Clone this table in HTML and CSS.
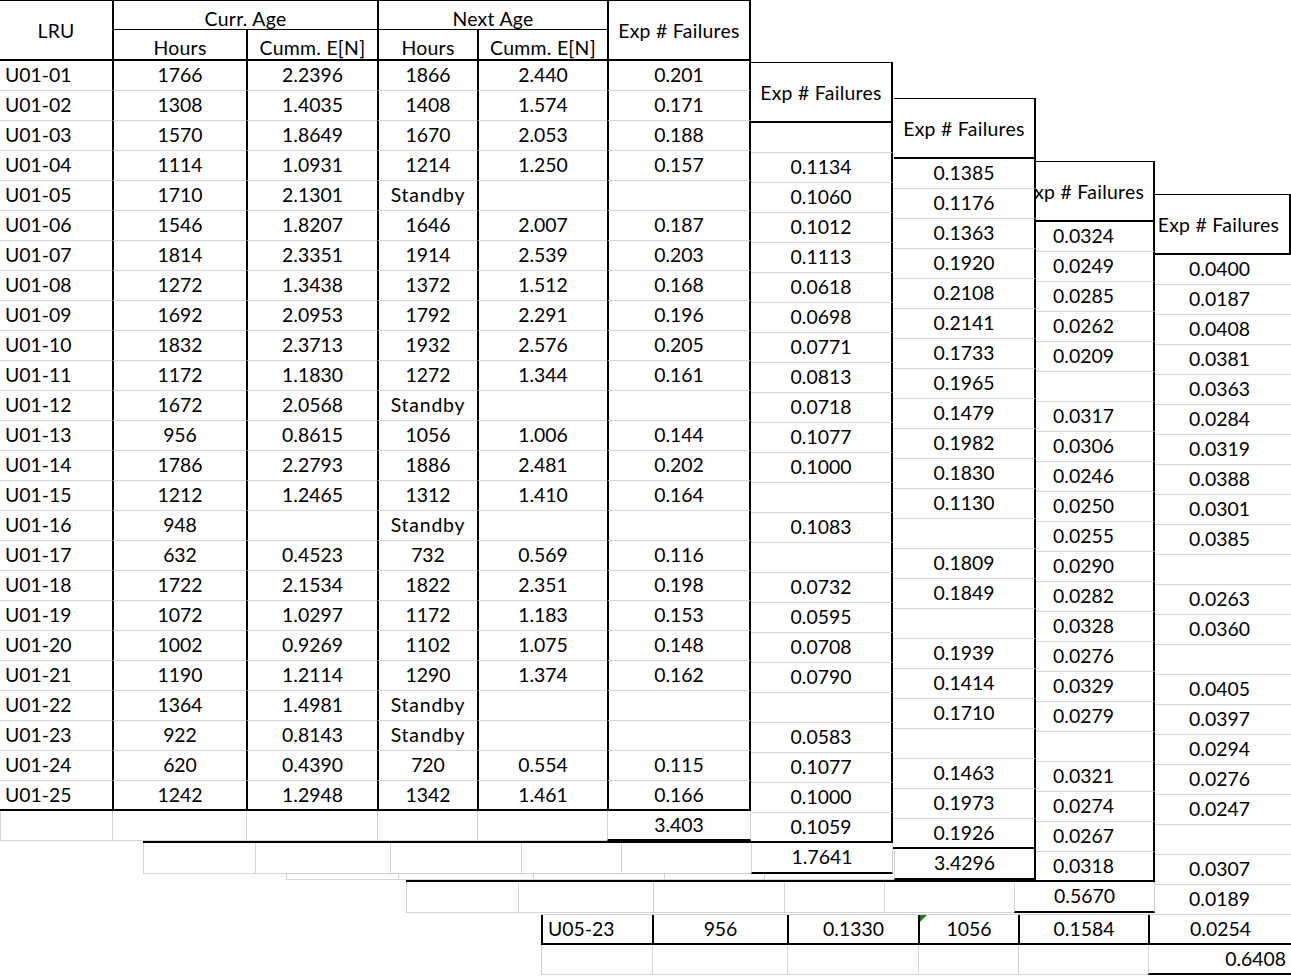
FILE: index.html
```html
<!DOCTYPE html>
<html>
<head>
<meta charset="utf-8">
<title>LRU Expected Failures</title>
<link rel="stylesheet" href="styles.css">
</head>
<body>
<div class="desk">

  <!-- Sheet 1 (front) -->
  <div class="sheet s1">
    <div class="hdr">
      <div class="h lru">LRU</div>
      <div class="h grp g1">Curr. Age</div>
      <div class="h grp g2">Next Age</div>
      <div class="h exp">Exp # Failures</div>
      <div class="h sub">Hours</div>
      <div class="h sub">Cumm. E[N]</div>
      <div class="h sub">Hours</div>
      <div class="h sub">Cumm. E[N]</div>
    </div>
    <div class="row"><div class="c l">U01-01</div><div class="c b">1766</div><div class="c b">2.2396</div><div class="c b">1866</div><div class="c b">2.440</div><div class="c b e">0.201</div></div>
    <div class="row"><div class="c l">U01-02</div><div class="c b">1308</div><div class="c b">1.4035</div><div class="c b">1408</div><div class="c b">1.574</div><div class="c b e">0.171</div></div>
    <div class="row"><div class="c l">U01-03</div><div class="c b">1570</div><div class="c b">1.8649</div><div class="c b">1670</div><div class="c b">2.053</div><div class="c b e">0.188</div></div>
    <div class="row"><div class="c l">U01-04</div><div class="c b">1114</div><div class="c b">1.0931</div><div class="c b">1214</div><div class="c b">1.250</div><div class="c b e">0.157</div></div>
    <div class="row"><div class="c l">U01-05</div><div class="c b">1710</div><div class="c b">2.1301</div><div class="c b t">Standby</div><div class="c b"></div><div class="c b e"></div></div>
    <div class="row"><div class="c l">U01-06</div><div class="c b">1546</div><div class="c b">1.8207</div><div class="c b">1646</div><div class="c b">2.007</div><div class="c b e">0.187</div></div>
    <div class="row"><div class="c l">U01-07</div><div class="c b">1814</div><div class="c b">2.3351</div><div class="c b">1914</div><div class="c b">2.539</div><div class="c b e">0.203</div></div>
    <div class="row"><div class="c l">U01-08</div><div class="c b">1272</div><div class="c b">1.3438</div><div class="c b">1372</div><div class="c b">1.512</div><div class="c b e">0.168</div></div>
    <div class="row"><div class="c l">U01-09</div><div class="c b">1692</div><div class="c b">2.0953</div><div class="c b">1792</div><div class="c b">2.291</div><div class="c b e">0.196</div></div>
    <div class="row"><div class="c l">U01-10</div><div class="c b">1832</div><div class="c b">2.3713</div><div class="c b">1932</div><div class="c b">2.576</div><div class="c b e">0.205</div></div>
    <div class="row"><div class="c l">U01-11</div><div class="c b">1172</div><div class="c b">1.1830</div><div class="c b">1272</div><div class="c b">1.344</div><div class="c b e">0.161</div></div>
    <div class="row"><div class="c l">U01-12</div><div class="c b">1672</div><div class="c b">2.0568</div><div class="c b t">Standby</div><div class="c b"></div><div class="c b e"></div></div>
    <div class="row"><div class="c l">U01-13</div><div class="c b">956</div><div class="c b">0.8615</div><div class="c b">1056</div><div class="c b">1.006</div><div class="c b e">0.144</div></div>
    <div class="row"><div class="c l">U01-14</div><div class="c b">1786</div><div class="c b">2.2793</div><div class="c b">1886</div><div class="c b">2.481</div><div class="c b e">0.202</div></div>
    <div class="row"><div class="c l">U01-15</div><div class="c b">1212</div><div class="c b">1.2465</div><div class="c b">1312</div><div class="c b">1.410</div><div class="c b e">0.164</div></div>
    <div class="row"><div class="c l">U01-16</div><div class="c b">948</div><div class="c b"></div><div class="c b t">Standby</div><div class="c b"></div><div class="c b e"></div></div>
    <div class="row"><div class="c l">U01-17</div><div class="c b">632</div><div class="c b">0.4523</div><div class="c b">732</div><div class="c b">0.569</div><div class="c b e">0.116</div></div>
    <div class="row"><div class="c l">U01-18</div><div class="c b">1722</div><div class="c b">2.1534</div><div class="c b">1822</div><div class="c b">2.351</div><div class="c b e">0.198</div></div>
    <div class="row"><div class="c l">U01-19</div><div class="c b">1072</div><div class="c b">1.0297</div><div class="c b">1172</div><div class="c b">1.183</div><div class="c b e">0.153</div></div>
    <div class="row"><div class="c l">U01-20</div><div class="c b">1002</div><div class="c b">0.9269</div><div class="c b">1102</div><div class="c b">1.075</div><div class="c b e">0.148</div></div>
    <div class="row"><div class="c l">U01-21</div><div class="c b">1190</div><div class="c b">1.2114</div><div class="c b">1290</div><div class="c b">1.374</div><div class="c b e">0.162</div></div>
    <div class="row"><div class="c l">U01-22</div><div class="c b">1364</div><div class="c b">1.4981</div><div class="c b t">Standby</div><div class="c b"></div><div class="c b e"></div></div>
    <div class="row"><div class="c l">U01-23</div><div class="c b">922</div><div class="c b">0.8143</div><div class="c b t">Standby</div><div class="c b"></div><div class="c b e"></div></div>
    <div class="row"><div class="c l">U01-24</div><div class="c b">620</div><div class="c b">0.4390</div><div class="c b">720</div><div class="c b">0.554</div><div class="c b e">0.115</div></div>
    <div class="row end"><div class="c l">U01-25</div><div class="c b">1242</div><div class="c b">1.2948</div><div class="c b">1342</div><div class="c b">1.461</div><div class="c b e">0.166</div></div>
    <div class="row tot"><div class="c"></div><div class="c"></div><div class="c"></div><div class="c"></div><div class="c"></div><div class="c u ge">3.403</div></div>
  </div>

  <!-- Sheet 2 -->
  <div class="sheet s2">
    <div class="hdr2"><div class="sp"></div><div class="h x">Exp # Failures</div></div>
    <div class="row"><div class="c sp"></div><div class="c e"></div></div>
    <div class="row"><div class="c sp"></div><div class="c e">0.1134</div></div>
    <div class="row"><div class="c sp"></div><div class="c e">0.1060</div></div>
    <div class="row"><div class="c sp"></div><div class="c e">0.1012</div></div>
    <div class="row"><div class="c sp"></div><div class="c e">0.1113</div></div>
    <div class="row"><div class="c sp"></div><div class="c e">0.0618</div></div>
    <div class="row"><div class="c sp"></div><div class="c e">0.0698</div></div>
    <div class="row"><div class="c sp"></div><div class="c e">0.0771</div></div>
    <div class="row"><div class="c sp"></div><div class="c e">0.0813</div></div>
    <div class="row"><div class="c sp"></div><div class="c e">0.0718</div></div>
    <div class="row"><div class="c sp"></div><div class="c e">0.1077</div></div>
    <div class="row"><div class="c sp"></div><div class="c e">0.1000</div></div>
    <div class="row"><div class="c sp"></div><div class="c e"></div></div>
    <div class="row"><div class="c sp"></div><div class="c e">0.1083</div></div>
    <div class="row"><div class="c sp"></div><div class="c e"></div></div>
    <div class="row"><div class="c sp"></div><div class="c e">0.0732</div></div>
    <div class="row"><div class="c sp"></div><div class="c e">0.0595</div></div>
    <div class="row"><div class="c sp"></div><div class="c e">0.0708</div></div>
    <div class="row"><div class="c sp"></div><div class="c e">0.0790</div></div>
    <div class="row"><div class="c sp"></div><div class="c e"></div></div>
    <div class="row"><div class="c sp"></div><div class="c e">0.0583</div></div>
    <div class="row"><div class="c sp"></div><div class="c e">0.1077</div></div>
    <div class="row"><div class="c sp"></div><div class="c e">0.1000</div></div>
    <div class="row end"><div class="c sp"></div><div class="c e">0.1059</div></div>
    <div class="row tot"><div class="c"></div><div class="c"></div><div class="c"></div><div class="c"></div><div class="c"></div><div class="c u ge">1.7641</div></div>
  </div>

  <!-- Sheet 3 -->
  <div class="sheet s3">
    <div class="hdr2"><div class="sp"></div><div class="h x">Exp # Failures</div></div>
    <div class="row"><div class="c sp"></div><div class="c e">0.1385</div></div>
    <div class="row"><div class="c sp"></div><div class="c e">0.1176</div></div>
    <div class="row"><div class="c sp"></div><div class="c e">0.1363</div></div>
    <div class="row"><div class="c sp"></div><div class="c e">0.1920</div></div>
    <div class="row"><div class="c sp"></div><div class="c e">0.2108</div></div>
    <div class="row"><div class="c sp"></div><div class="c e">0.2141</div></div>
    <div class="row"><div class="c sp"></div><div class="c e">0.1733</div></div>
    <div class="row"><div class="c sp"></div><div class="c e">0.1965</div></div>
    <div class="row"><div class="c sp"></div><div class="c e">0.1479</div></div>
    <div class="row"><div class="c sp"></div><div class="c e">0.1982</div></div>
    <div class="row"><div class="c sp"></div><div class="c e">0.1830</div></div>
    <div class="row"><div class="c sp"></div><div class="c e">0.1130</div></div>
    <div class="row"><div class="c sp"></div><div class="c e"></div></div>
    <div class="row"><div class="c sp"></div><div class="c e">0.1809</div></div>
    <div class="row"><div class="c sp"></div><div class="c e">0.1849</div></div>
    <div class="row"><div class="c sp"></div><div class="c e"></div></div>
    <div class="row"><div class="c sp"></div><div class="c e">0.1939</div></div>
    <div class="row"><div class="c sp"></div><div class="c e">0.1414</div></div>
    <div class="row"><div class="c sp"></div><div class="c e">0.1710</div></div>
    <div class="row"><div class="c sp"></div><div class="c e"></div></div>
    <div class="row"><div class="c sp"></div><div class="c e">0.1463</div></div>
    <div class="row"><div class="c sp"></div><div class="c e">0.1973</div></div>
    <div class="row end"><div class="c sp"></div><div class="c e">0.1926</div></div>
    <div class="row tot"><div class="c"></div><div class="c"></div><div class="c"></div><div class="c"></div><div class="c"></div><div class="c u e">3.4296</div></div>
  </div>

  <!-- Sheet 4 -->
  <div class="sheet s4">
    <div class="hdr2"><div class="sp"></div><div class="h x">Exp # Failures</div></div>
    <div class="row"><div class="c sp"></div><div class="c e">0.0324</div></div>
    <div class="row"><div class="c sp"></div><div class="c e">0.0249</div></div>
    <div class="row"><div class="c sp"></div><div class="c e">0.0285</div></div>
    <div class="row"><div class="c sp"></div><div class="c e">0.0262</div></div>
    <div class="row"><div class="c sp"></div><div class="c e">0.0209</div></div>
    <div class="row"><div class="c sp"></div><div class="c e"></div></div>
    <div class="row"><div class="c sp"></div><div class="c e">0.0317</div></div>
    <div class="row"><div class="c sp"></div><div class="c e">0.0306</div></div>
    <div class="row"><div class="c sp"></div><div class="c e">0.0246</div></div>
    <div class="row"><div class="c sp"></div><div class="c e">0.0250</div></div>
    <div class="row"><div class="c sp"></div><div class="c e">0.0255</div></div>
    <div class="row"><div class="c sp"></div><div class="c e">0.0290</div></div>
    <div class="row"><div class="c sp"></div><div class="c e">0.0282</div></div>
    <div class="row"><div class="c sp"></div><div class="c e">0.0328</div></div>
    <div class="row"><div class="c sp"></div><div class="c e">0.0276</div></div>
    <div class="row"><div class="c sp"></div><div class="c e">0.0329</div></div>
    <div class="row"><div class="c sp"></div><div class="c e">0.0279</div></div>
    <div class="row"><div class="c sp"></div><div class="c e"></div></div>
    <div class="row"><div class="c sp"></div><div class="c e">0.0321</div></div>
    <div class="row"><div class="c sp"></div><div class="c e">0.0274</div></div>
    <div class="row"><div class="c sp"></div><div class="c e">0.0267</div></div>
    <div class="row end"><div class="c sp"></div><div class="c e">0.0318</div></div>
    <div class="row tot"><div class="c"></div><div class="c"></div><div class="c"></div><div class="c"></div><div class="c"></div><div class="c u ge">0.5670</div></div>
  </div>

  <!-- Sheet 5 (back) -->
  <div class="sheet s5">
    <div class="hdr2"><div class="sp"></div><div class="h x">Exp # Failures</div></div>
    <div class="row"><div class="c sp"></div><div class="c">0.0400</div></div>
    <div class="row"><div class="c sp"></div><div class="c">0.0187</div></div>
    <div class="row"><div class="c sp"></div><div class="c">0.0408</div></div>
    <div class="row"><div class="c sp"></div><div class="c">0.0381</div></div>
    <div class="row"><div class="c sp"></div><div class="c">0.0363</div></div>
    <div class="row"><div class="c sp"></div><div class="c">0.0284</div></div>
    <div class="row"><div class="c sp"></div><div class="c">0.0319</div></div>
    <div class="row"><div class="c sp"></div><div class="c">0.0388</div></div>
    <div class="row"><div class="c sp"></div><div class="c">0.0301</div></div>
    <div class="row"><div class="c sp"></div><div class="c">0.0385</div></div>
    <div class="row"><div class="c sp"></div><div class="c"></div></div>
    <div class="row"><div class="c sp"></div><div class="c">0.0263</div></div>
    <div class="row"><div class="c sp"></div><div class="c">0.0360</div></div>
    <div class="row"><div class="c sp"></div><div class="c"></div></div>
    <div class="row"><div class="c sp"></div><div class="c">0.0405</div></div>
    <div class="row"><div class="c sp"></div><div class="c">0.0397</div></div>
    <div class="row"><div class="c sp"></div><div class="c">0.0294</div></div>
    <div class="row"><div class="c sp"></div><div class="c">0.0276</div></div>
    <div class="row"><div class="c sp"></div><div class="c">0.0247</div></div>
    <div class="row"><div class="c sp"></div><div class="c"></div></div>
    <div class="row"><div class="c sp"></div><div class="c">0.0307</div></div>
    <div class="row"><div class="c sp"></div><div class="c">0.0189</div></div>
    <div class="row end"><div class="c l b">U05-23</div><div class="c b">956</div><div class="c b">0.1330</div><div class="c b err">1056</div><div class="c b">0.1584</div><div class="c b">0.0254</div></div>
    <div class="row tot"><div class="c"></div><div class="c"></div><div class="c"></div><div class="c"></div><div class="c"></div><div class="c u r">0.6408</div></div>
  </div>

</div>
</body>
</html>
```

FILE: styles.css
```css
* {
  box-sizing: border-box;
  margin: 0;
  padding: 0;
}

html, body {
  background: #ffffff;
}

body {
  margin: 0;
  font-family: Lato, "Liberation Sans", sans-serif;
  font-size: 19.4px;
  color: #000000;
}

.desk {
  position: relative;
  width: 1291px;
  height: 977px;
  overflow: hidden;
  background: #ffffff;
}

/* Each sheet is an overlapping window on the canvas */
.sheet {
  position: absolute;
  background: #ffffff;
}

.s1 { left: 0;     top: 0;     z-index: 5; --cols: 112px 134px 131px 100px 130px 144px; }
.s2 { left: 143px; top: 62px;  z-index: 4; --cols: 112px 135px 131px 100px 130px 142px; }
.s3 { left: 286px; top: 98px;  z-index: 3; --cols: 112px 135px 131px 100px 130px 142px; }
.s4 { left: 406px; top: 161px; z-index: 2; --cols: 112px 135px 131px 100px 130px 141px; }
.s5 { left: 541px; top: 194px; z-index: 1; --cols: 111px 135px 131px 100px 130px 143px; }

/* Header of the front sheet */
.hdr {
  display: grid;
  grid-template-columns: var(--cols);
  grid-template-rows: 30px 31px;
  height: 61px;
}

.h {
  display: flex;
  align-items: center;
  justify-content: center;
  white-space: nowrap;
  overflow: hidden;
  border-top: 1px solid #000;
  letter-spacing: 0.3px;
}

.lru {
  grid-row: 1 / 3;
  grid-column: 1;
  border-bottom: 2px solid #000;
}

.grp {
  grid-row: 1;
  border-left: 2px solid #000;
  border-bottom: 1px solid #000;
  padding-top: 6px;
}

.g1 { grid-column: 2 / 4; }
.g2 { grid-column: 4 / 6; }

.exp {
  grid-row: 1 / 3;
  grid-column: 6;
  border-left: 2px solid #000;
  border-right: 2px solid #000;
  border-bottom: 2px solid #000;
}

.sub {
  grid-row: 2;
  border-top: none;
  border-left: 2px solid #000;
  border-bottom: 2px solid #000;
  padding-top: 6px;
}

/* Header of the sheets behind */
.hdr2 {
  display: grid;
  grid-template-columns: var(--cols);
  height: 61px;
}

.sp {
  grid-column: 1 / 6;
}

.x {
  grid-column: 6;
  border-right: 2px solid #000;
  border-bottom: 2px solid #000;
}

/* Body rows */
.row {
  display: grid;
  grid-template-columns: var(--cols);
  height: 30px;
}

.c {
  position: relative;
  border-bottom: 1px solid #d4d4d4;
  text-align: center;
  line-height: 28px;
  white-space: nowrap;
  overflow: hidden;
}

.l {
  text-align: left;
  padding-left: 5px;
}

.r {
  text-align: right;
  padding-right: 5px;
}

.t {
  letter-spacing: 0.8px;
}

.b { border-left: 2px solid #000; }
.e { border-right: 2px solid #000; }

.end .c {
  border-bottom: 2px solid #000;
}

.tot { height: 31px; }
.s1 .tot, .s5 .tot { height: 30px; }

.tot .c {
  border-left: 1px solid #d4d4d4;
}

.ge { border-right: 1px solid #d4d4d4; }

.tot .u {
  border-bottom: 2px solid #000;
}

/* Excel error indicator */
.err::before {
  content: "";
  position: absolute;
  left: 0;
  top: 0;
  border-top: 7px solid #1f7d1f;
  border-right: 7px solid transparent;
}
```
